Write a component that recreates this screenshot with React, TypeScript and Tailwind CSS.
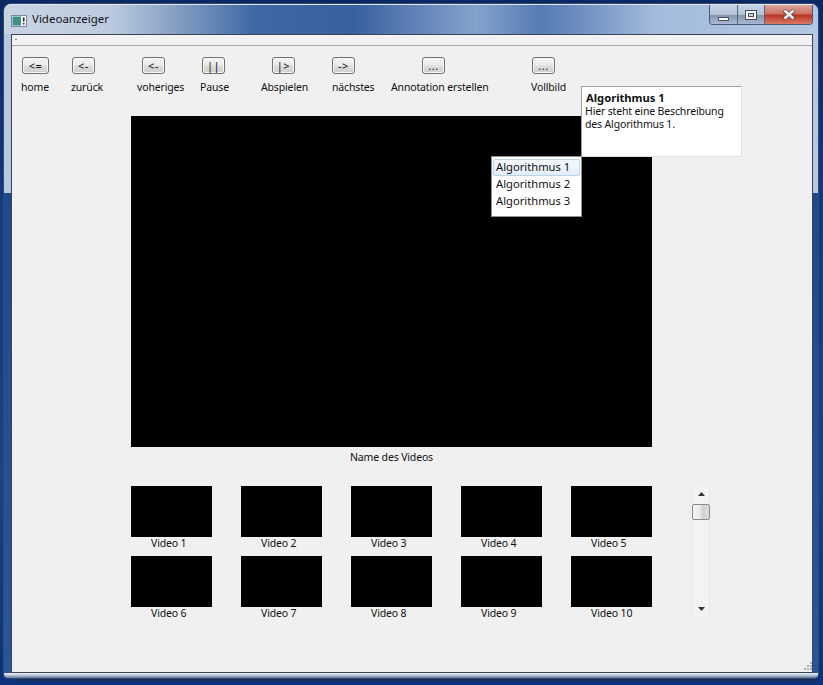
const tools = [
  { b: "<=", l: "home", col: "w-[50px]", btn: "ml-[1px] w-[27px]" },
  { b: "<-", l: "zurück", col: "w-[66px]", btn: "ml-[1px] w-[23px]" },
  { b: "<-", l: "voheriges", col: "w-[63px]", btn: "ml-[5px] w-[23px]" },
  { b: "||", l: "Pause", col: "w-[61px]", btn: "ml-[2px] w-[23px]" },
  { b: "|>", l: "Abspielen", col: "w-[71px]", btn: "ml-[11px] w-[23px]" },
  { b: "->", l: "nächstes", col: "w-[59px]", btn: "ml-[0px] w-[23px]" },
  { b: "...", l: "Annotation erstellen", col: "w-[140px]", btn: "ml-[31px] w-[23px]" },
  { b: "...", l: "Vollbild", col: "w-[60px]", btn: "ml-[1px] w-[23px]" },
];

const row1 = ["Video 1", "Video 2", "Video 3", "Video 4", "Video 5"];
const row2 = ["Video 6", "Video 7", "Video 8", "Video 9", "Video 10"];

function Thumbs({ items }: { items: string[] }) {
  return (
    <div className="flex gap-[29px]">
      {items.map((t) => (
        <div key={t} className="h-[70px] w-[81px]">
          <div className="h-[51px] bg-black" />
          <div className="mt-[-1px] whitespace-nowrap pl-[20px] leading-[15px]">{t}</div>
        </div>
      ))}
    </div>
  );
}

export default function App() {
  return (
    <div
      className="relative h-[685px] w-[823px] overflow-hidden bg-[linear-gradient(180deg,#0a2863_0%,#123a80_30%,#16428c_70%,#0a3379_100%)] text-[10.5px] tracking-[-0.15px] text-[#111]"
      style={{ fontFamily: '"Noto Sans", Tahoma, sans-serif' }}
    >
      <div className="absolute bottom-[4px] left-[18px] right-[8px] h-[3px] bg-[#1a2c50]" />
      <div className="absolute bottom-[7px] left-[4px] right-[5px] top-[4px] flex flex-col overflow-hidden rounded-b-[4px] rounded-t-[7px] bg-[linear-gradient(180deg,#b9c8de_0px,#b9c8de_189px,#20498d_189px,#2a5596_100%)] pl-[7px] pr-[5px] shadow-[0_0_0_1px_#33496f]">
        <div className="-ml-[7px] -mr-[5px] flex h-[30px] shrink-0 items-center border-t border-[#dfe7f2] bg-[linear-gradient(90deg,#c8d4e4_0%,#bccbdf_13%,#7f9ac0_22%,#3d67a5_31%,#36609f_43%,#5e80b6_50%,#85a2cc_58%,#557bb4_66%,#7694c4_72%,#a4bbdd_80%,#b4c8e4_100%)] pl-[7px] pr-[5px]">
          <svg width="16" height="12" viewBox="0 0 16 12" className="mt-[2px]">
            <rect x="0.5" y="0.5" width="15" height="11" fill="#f2f4f7" stroke="#75889c" />
            <rect x="1.5" y="1.5" width="8.5" height="9" fill="#3f8f86" />
            <rect x="12" y="2.5" width="1.5" height="4" fill="#222" />
            <rect x="12" y="8" width="1.5" height="1.5" fill="#222" />
          </svg>
          <span className="ml-[5px] mt-[-1px] text-[11.5px] tracking-normal text-[#141414]">Videoanzeiger</span>
          <div className="ml-auto mt-[0px] flex h-[20px] self-start overflow-hidden rounded-b-[4px] border border-t-0 border-[#4a5a75]">
            <div className="flex w-[28px] items-end justify-center border-r border-[#55657f] bg-[linear-gradient(180deg,#c6d3e6_0%,#b4c3d9_50%,#8293ac_52%,#a9b9d1_100%)] pb-[3px]">
              <div className="h-[4px] w-[11px] border border-[#44505f] bg-white" />
            </div>
            <div className="flex w-[27px] items-center justify-center border-r border-[#55657f] bg-[linear-gradient(180deg,#c6d3e6_0%,#b4c3d9_50%,#8293ac_52%,#a9b9d1_100%)]">
              <div className="flex h-[10px] w-[12px] items-center justify-center border border-[#44505f] bg-white">
                <div className="h-[4px] w-[6px] border border-[#44505f] bg-[#c6d3e6]" />
              </div>
            </div>
            <div className="flex w-[47px] items-center justify-center bg-[linear-gradient(180deg,#d9a79e_0%,#cf6d5e_48%,#b8301f_52%,#d97a66_100%)]">
              <svg width="14" height="11" viewBox="0 0 14 11">
                <path d="M2 1.5 L12 9.5 M12 1.5 L2 9.5" stroke="#4a4a4a" strokeWidth="4" />
                <path d="M2.5 1.5 L11.5 9.5 M11.5 1.5 L2.5 9.5" stroke="#f4f4f4" strokeWidth="2.4" />
              </svg>
            </div>
          </div>
        </div>

        <div className="relative flex min-h-0 flex-1 flex-col border border-[#3a4658] bg-[#f0f0f0]">
          <div className="flex h-[11px] shrink-0 items-end border-b border-[#a8a8a8] bg-[#f2f2f2] pl-[3px]">
            <div className="mb-[5px] h-[1px] w-[2px] bg-[#888]" />
          </div>

          <div className="flex shrink-0 pl-[9px] pt-[11px]">
            {tools.map((t) => (
              <div key={t.l} className={`${t.col} shrink-0`}>
                <div
                  className={`${t.btn} flex h-[17px] items-center justify-center rounded-[3px] border border-[#707070] bg-[linear-gradient(180deg,#f3f3f3_0%,#ebebeb_48%,#dddddd_52%,#cfcfcf_100%)] text-[11px] leading-none tracking-[0.5px] shadow-[inset_0_0_0_1px_#f8f8f8]`}
                >
                  {t.b}
                </div>
                <div className="mt-[6px] whitespace-nowrap leading-[15px]">{t.l}</div>
              </div>
            ))}
          </div>

          <div className="ml-[119px] mt-[21px] flex w-[521px] flex-col">
            <div className="h-[331px] bg-black" />
            <div className="h-[39px] pt-[3px] text-center leading-[15px]">Name des Videos</div>
            <Thumbs items={row1} />
            <Thumbs items={row2} />
          </div>

          <div className="absolute left-[680px] top-[451px] flex h-[131px] w-[18px] flex-col items-center justify-between border-x border-[#e8e8e8] bg-[#f3f3f3] py-[6px]">
            <svg width="7" height="4" viewBox="0 0 7 4"><path d="M3.5 0 L7 4 L0 4 Z" fill="#333" /></svg>
            <svg width="7" height="4" viewBox="0 0 7 4"><path d="M0 0 L7 0 L3.5 4 Z" fill="#333" /></svg>
          </div>
          <div className="absolute left-[680px] top-[469px] h-[16px] w-[18px] rounded-[2px] border border-[#8a8a8a] bg-[linear-gradient(90deg,#f6f6f6_0%,#ececec_40%,#d2d2d6_60%,#dcdcdc_100%)]" />

          <svg width="11" height="11" viewBox="0 0 11 11" className="absolute bottom-[0px] right-[0px]">
            {[[9, 1], [9, 4], [6, 4], [9, 7], [6, 7], [3, 7]].map(([x, y]) => (
              <rect key={`${x}-${y}`} x={x} y={y} width="2" height="2" fill="#b0b0b0" />
            ))}
          </svg>

          <div className="absolute left-[569px] top-[51px] h-[71px] w-[161px] border border-[#e0e0e0] border-l-[#a0a0a0] border-t-[#a0a0a0] bg-white pl-[3px] pt-[4px] text-[10.5px] leading-[13px]">
            <div className="ml-[1px] text-[11.2px] font-bold leading-[14px] tracking-normal">Algorithmus 1</div>
            <div>Hier steht eine Beschreibung</div>
            <div>des Algorithmus 1.</div>
          </div>

          <div className="absolute left-[479px] top-[121px] h-[61px] w-[91px] border border-[#8f8f8f] bg-white px-[1px] pt-[2px] text-[11.2px] tracking-normal">
            <div className="flex h-[17px] items-center rounded-[2px] border border-[#b9d4ee] bg-[linear-gradient(180deg,#f4f8fd_0%,#e4eefa_100%)] pl-[2px]">Algorithmus 1</div>
            <div className="flex h-[17px] items-center pl-[3px]">Algorithmus 2</div>
            <div className="flex h-[17px] items-center pl-[3px]">Algorithmus 3</div>
          </div>
        </div>

        <div className="-ml-[7px] -mr-[5px] h-[5px] shrink-0 bg-[linear-gradient(180deg,#eef1f6_0%,#b5c1d4_50%,#5f7599_100%)]" />
      </div>
    </div>
  );
}
